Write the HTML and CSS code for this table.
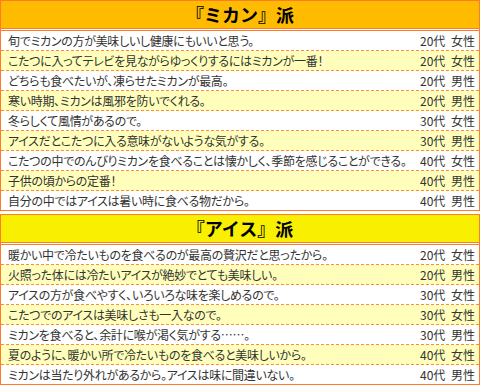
FILE: index.html
```html
<!DOCTYPE html>
<html lang="ja">
<head>
<meta charset="utf-8">
<link rel="stylesheet" href="styles.css">
</head>
<body>
<section class="box box-mikan">
  <h2 class="box-title">『ミカン』派</h2>
  <ul class="list">
    <li class="row"><span class="msg">旬でミカンの方が美味しいし健康にもいいと思う。</span><span class="who">20代 女性</span></li>
    <li class="row alt"><span class="msg">こたつに入ってテレビを見ながらゆっくりするにはミカンが一番！</span><span class="who">20代 女性</span></li>
    <li class="row"><span class="msg">どちらも食べたいが、凍らせたミカンが最高。</span><span class="who">20代 男性</span></li>
    <li class="row alt"><span class="msg">寒い時期、ミカンは風邪を防いでくれる。</span><span class="who">20代 男性</span></li>
    <li class="row"><span class="msg">冬らしくて風情があるので。</span><span class="who">30代 女性</span></li>
    <li class="row alt"><span class="msg">アイスだとこたつに入る意味がないような気がする。</span><span class="who">30代 男性</span></li>
    <li class="row"><span class="msg">こたつの中でのんびりミカンを食べることは懐かしく、季節を感じることができる。</span><span class="who">40代 女性</span></li>
    <li class="row alt"><span class="msg">子供の頃からの定番！</span><span class="who">40代 男性</span></li>
    <li class="row"><span class="msg">自分の中ではアイスは暑い時に食べる物だから。</span><span class="who">40代 男性</span></li>
  </ul>
</section>
<section class="box box-ice">
  <h2 class="box-title">『アイス』派</h2>
  <ul class="list">
    <li class="row"><span class="msg">暖かい中で冷たいものを食べるのが最高の贅沢だと思ったから。</span><span class="who">20代 女性</span></li>
    <li class="row alt"><span class="msg">火照った体には冷たいアイスが絶妙でとても美味しい。</span><span class="who">20代 男性</span></li>
    <li class="row"><span class="msg">アイスの方が食べやすく、いろいろな味を楽しめるので。</span><span class="who">30代 女性</span></li>
    <li class="row alt"><span class="msg">こたつでのアイスは美味しさも一入なので。</span><span class="who">30代 女性</span></li>
    <li class="row"><span class="msg">ミカンを食べると、余計に喉が渇く気がする……。</span><span class="who">30代 男性</span></li>
    <li class="row alt"><span class="msg">夏のように、暖かい所で冷たいものを食べると美味しいから。</span><span class="who">40代 女性</span></li>
    <li class="row"><span class="msg">ミカンは当たり外れがあるから。アイスは味に間違いない。</span><span class="who">40代 男性</span></li>
  </ul>
</section>
</body>
</html>
```
FILE: styles.css
```css
html, body {
  margin: 0;
  padding: 0;
  background: #ffffff;
}
body {
  width: 480px;
  font-family: "Noto Sans CJK JP", "Noto Sans", sans-serif;
  color: #333333;
}
.box {
  border: 1px solid #ff7a2a;
  background: #ffffff;
}
.box + .box {
  margin-top: 3px;
}
.box-title {
  margin: 0;
  height: 27px;
  line-height: 27px;
  border-bottom: 1px solid #ff7a2a;
  text-align: center;
  font-size: 18px;
  font-weight: bold;
  color: #000000;
}
.box-mikan .box-title {
  background: #ffbb00;
}
.box-ice .box-title {
  background: #f8f000;
}
.list {
  list-style: none;
  margin: 1px 0 0 0;
  padding: 0;
  border-top: 1px solid #ff7a2a;
}
.row {
  display: flex;
  justify-content: space-between;
  align-items: center;
  height: 19px;
  padding: 0 4px 0 7px;
  font-size: 12px;
  line-height: 19px;
  border-bottom: 1px dashed #ff8a3a;
  white-space: nowrap;
}
.row:last-child {
  border-bottom: none;
}
.row.alt {
  background: #ffffbb;
}
.msg {
  font-feature-settings: "palt";
  letter-spacing: -0.3px;
}
.who {
  flex-shrink: 0;
  word-spacing: 3px;
}
```
